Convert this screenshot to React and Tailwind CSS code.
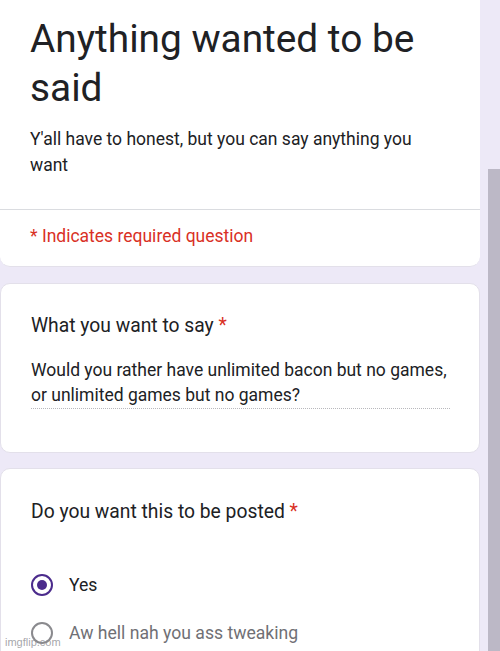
import React from 'react';

const font = { fontFamily: 'Roboto, "Liberation Sans", sans-serif' };

function Radio({ checked, label }) {
  return (
    <div className="flex items-center h-[48px]">
      {checked ? (
        <span className="w-[22px] h-[22px] rounded-full border-2 border-[#4b2b8c] flex items-center justify-center ml-[30px]">
          <span className="w-[10px] h-[10px] rounded-full bg-[#4b2b8c]" />
        </span>
      ) : (
        <span className="w-[22px] h-[22px] rounded-full border-2 border-[#8a8a8e] ml-[30px]" />
      )}
      <span className={`ml-[16px] text-[17.6px] ${checked ? 'text-[#202124]' : 'text-[#707075]'}`}>{label}</span>
    </div>
  );
}

export default function App() {
  return (
    <div className="relative flex w-[500px] h-[651px] overflow-hidden bg-[#ede9f7] text-[#202124]" style={font}>
      <div className="w-[480px] flex flex-col">
        <div className="bg-white rounded-b-[10px] border-b border-[#e3e0ea]">
          <div className="pl-[30px] pr-[29px] pt-[14px] pb-[31px]">
            <h1 className="text-[38.8px] leading-[49px] font-normal">Anything wanted to be said</h1>
            <p className="mt-[14px] text-[17.5px] leading-[26px]">Y'all have to honest, but you can say anything you want</p>
          </div>
          <div className="border-t border-[#dadce0] pl-[30px] pt-[14px] pb-[18px] text-[17.5px] leading-[24px] text-[#d93025]">
            * Indicates required question
          </div>
        </div>

        <div className="mt-[16px] bg-white rounded-[10px] border border-[#e3e0ea] pl-[30px] pr-[29px] pt-[30px] pb-[43px]">
          <div className="text-[19.3px] leading-[24px]">
            What you want to say <span className="text-[#d93025]">*</span>
          </div>
          <div className="mt-[20px] text-[17.5px] leading-[25px] border-b border-dotted border-[#b8b8bc]">
            Would you rather have unlimited bacon but no games, or unlimited games but no games?
          </div>
        </div>

        <div className="mt-[15px] flex-1 bg-white rounded-t-[10px] border border-[#e3e0ea] pt-[31px]">
          <div className="pl-[30px] text-[19.3px] leading-[24px]">
            Do you want this to be posted <span className="text-[#d93025]">*</span>
          </div>
          <div className="mt-[37px]">
            <Radio checked label="Yes" />
            <Radio label="Aw hell nah you ass tweaking" />
          </div>
        </div>
      </div>

      <div className="w-[20px] flex flex-col">
        <div className="h-[169px]" />
        <div className="flex-1 ml-[8px] bg-[#bcb8c6]" />
      </div>

      <div className="absolute left-[5px] bottom-[2px] text-[11px] leading-[14px] text-[#8e8e93]/80" style={{ fontFamily: '"Liberation Sans", sans-serif' }}>
        imgflip.com
      </div>
    </div>
  );
}
